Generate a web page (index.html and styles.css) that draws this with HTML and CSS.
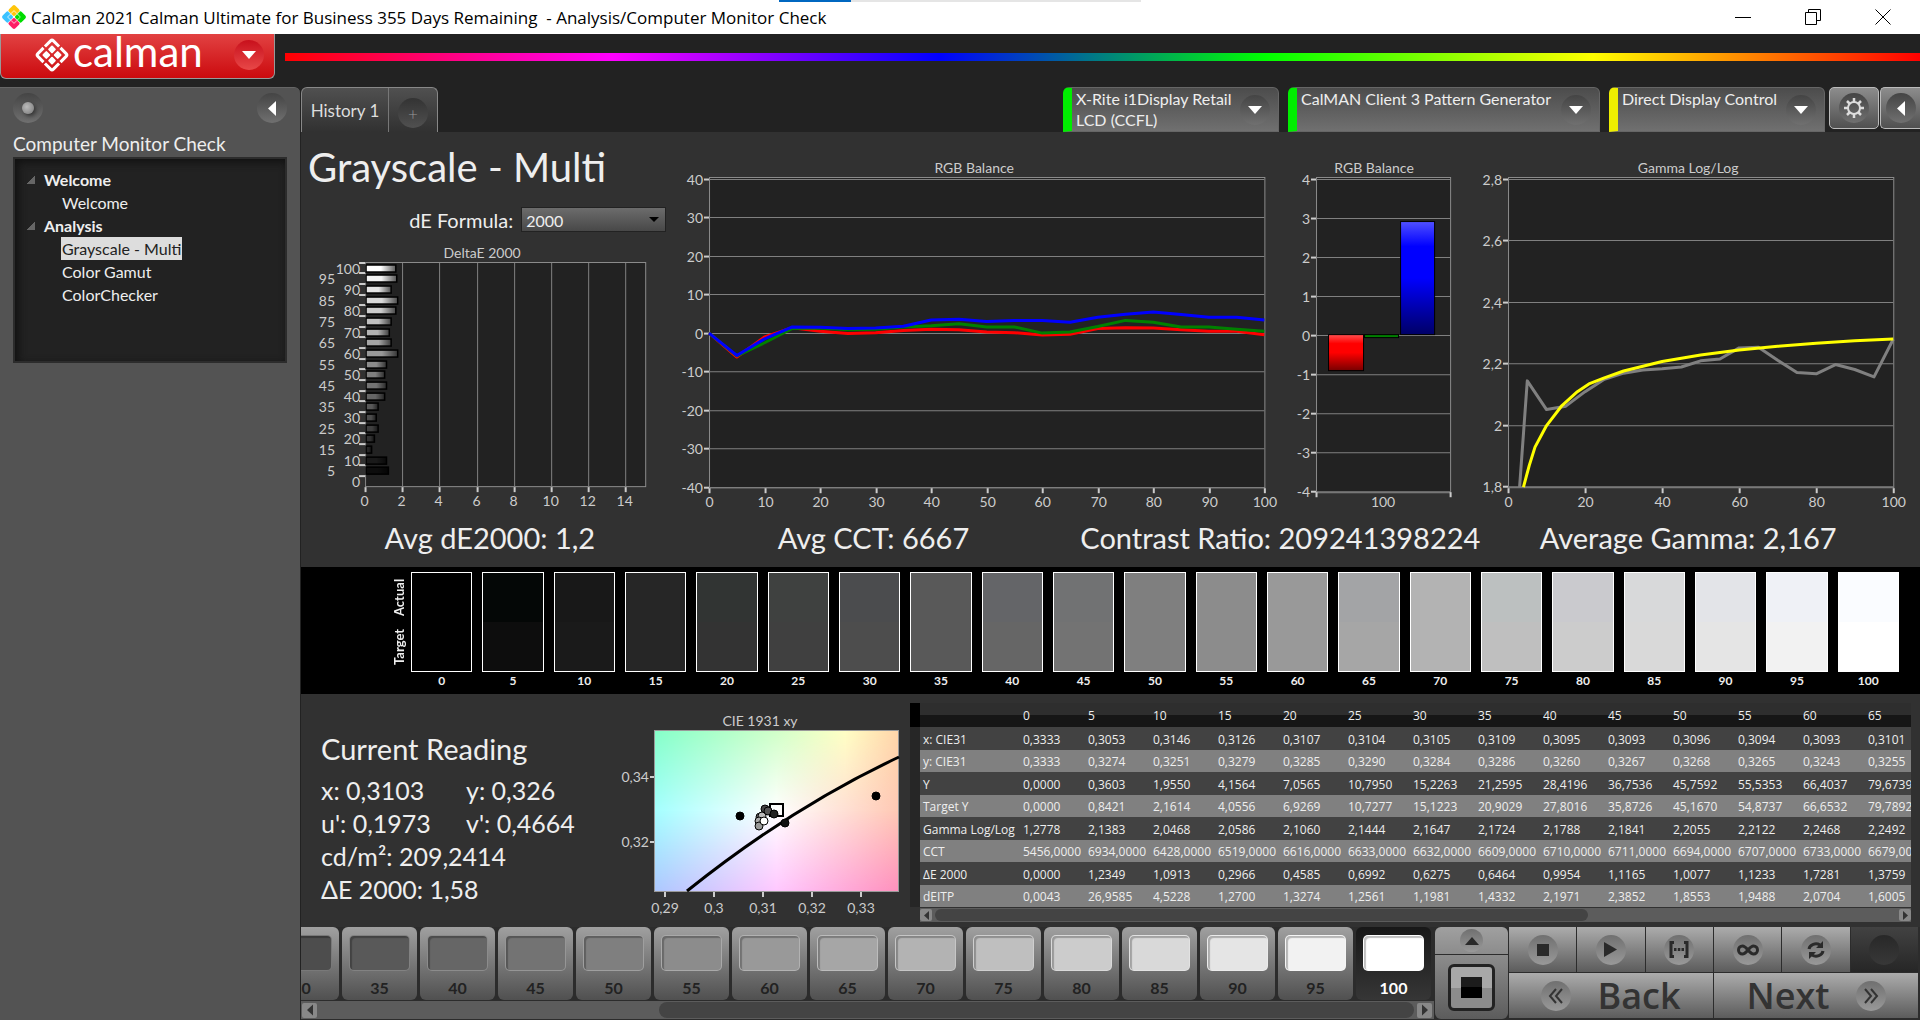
FILE: index.html
```html
<!DOCTYPE html>
<html lang="en">
<head>
    <meta charset="UTF-8">
    <meta name="viewport" content="width=device-width, initial-scale=1.0">
    <title>Calman 2021</title>
    <link rel="stylesheet" href="styles.css">
</head>
<body>
    <header class="titlebar">
        <svg class="app-icon" width="26" height="26" viewBox="0 0 26 26">
            <g transform="rotate(45 13 13)">
                <rect x="4" y="4" width="9" height="9" rx="2" fill="#ffc60b"/>
                <rect x="13" y="4" width="9" height="9" rx="2" fill="#0d0"/>
                <rect x="4" y="13" width="9" height="9" rx="2" fill="#3cc3ff"/>
                <rect x="13" y="13" width="9" height="9" rx="2" fill="#ff1f66"/>
                <path d="M8.500 8.500V13M8.500 8.500H13M17.500 8.500V13M13 8.500h4.500M8.500 13v4.500H13M17.500 13v4.500H13M13 5v16M5 13h16" stroke="#fff" stroke-opacity=".55" fill="none"/>
            </g>
        </svg>
        <span class="titlebar-text">Calman 2021 Calman Ultimate for Business 355 Days Remaining &nbsp;- Analysis/Computer Monitor Check</span>
        <span class="progress"></span>
        <div class="window-buttons">
            <button aria-label="Minimize"><svg width="16" height="16" viewBox="0 0 16 16"><path d="M0 8.5h16"/></svg></button>
            <button aria-label="Restore"><svg width="16" height="16" viewBox="0 0 16 16"><path d="M.5 3.5h11v12H.5zM3.500 3.500V.5h12v11h-4"/></svg></button>
            <button aria-label="Close"><svg width="16" height="16" viewBox="0 0 16 16"><path d="M.5.5l15 15M15.500.5l-15 15"/></svg></button>
        </div>
    </header>

    <div class="brandbar">
        <button class="brand">
            <svg width="36" height="36" viewBox="0 0 36 36">
                <g transform="rotate(45 18 18)" fill="#fff">
                    <rect x="11" y="11" width="6" height="6" rx="1"/>
                    <rect x="19" y="11" width="6" height="6" rx="1"/>
                    <rect x="11" y="19" width="6" height="6" rx="1"/>
                    <rect x="19" y="19" width="6" height="6" rx="1"/>
                    <path d="M7 17V9q0-2 2-2h8M19 7h8q2 0 2 2v8M29 19v8q0 2-2 2h-8M17 29H9q-2 0-2-2v-8" fill="none" stroke="#fff" stroke-width="3"/>
                </g>
            </svg>
            <span class="brand-name">calman</span>
            <span class="round round-red"><svg width="14" height="8" viewBox="0 0 14 8"><path d="M0 0h14L7 8z"/></svg></span>
        </button>
        <div class="rainbow"></div>
    </div>

    <div class="workspace">
        <aside class="sidebar">
            <div class="sidebar-top">
                <button class="round" aria-label="Status"><span class="knob"></span></button>
                <button class="round" aria-label="Collapse"><svg width="8" height="15" viewBox="0 0 8 15"><path d="M8 0v15L0 7.500z"/></svg></button>
            </div>
            <h2>Computer Monitor Check</h2>
            <nav class="tree">
                <p class="tree-group">Welcome</p>
                <a href="#">Welcome</a>
                <p class="tree-group">Analysis</p>
                <a href="#" class="selected">Grayscale - Multi</a>
                <a href="#">Color Gamut</a>
                <a href="#">ColorChecker</a>
            </nav>
        </aside>

        <main class="main">
            <div class="tabbar">
                <div class="tabs">
                    <button class="tab">History 1</button>
                    <button class="tab tab-add" aria-label="Add tab"><span class="round">+</span></button>
                </div>
                <button class="device device-meter"><span>X-Rite i1Display Retail<br>LCD (CCFL)</span><span class="round"><svg width="14" height="8" viewBox="0 0 14 8"><path d="M0 0h14L7 8z"/></svg></span></button>
                <button class="device device-source"><span>CalMAN Client 3 Pattern Generator</span><span class="round"><svg width="14" height="8" viewBox="0 0 14 8"><path d="M0 0h14L7 8z"/></svg></span></button>
                <button class="device device-display"><span>Direct Display Control</span><span class="round"><svg width="14" height="8" viewBox="0 0 14 8"><path d="M0 0h14L7 8z"/></svg></span></button>
                <button class="tool" aria-label="Settings"><span class="round"><svg width="22" height="22" viewBox="0 0 22 22"><circle cx="11" cy="11" r="6" fill="none" stroke="#ddd" stroke-width="2"/><path d="M11 1v4M11 17v4M1 11h4M17 11h4M4 4l2.500 2.500M15.500 15.500L18 18M4 18l2.500-2.500M15.500 6.500L18 4" stroke="#ddd" stroke-width="2.500"/></svg></span></button>
                <button class="tool tool-last" aria-label="Collapse"><span class="round"><svg width="8" height="15" viewBox="0 0 8 15"><path d="M8 0v15L0 7.500z"/></svg></span></button>
            </div>

            <section class="charts">
                <div class="delta">
                    <h1>Grayscale - Multi</h1>
                    <div class="formula">
                        <label for="formula">dE Formula:</label>
                        <select id="formula"><option>2000</option><option>1994</option><option>1976</option></select>
                    </div>
                    <svg id="delta-chart" class="chart" viewBox="0 0 378 273"></svg>
                </div>
                <svg id="rgb-chart" class="chart chart-tall" viewBox="0 0 600 360"></svg>
                <svg id="bar-chart" class="chart chart-tall" viewBox="0 0 190 360"></svg>
                <svg id="gamma-chart" class="chart chart-tall" viewBox="0 0 450 360"></svg>
            </section>

            <section class="metrics">
                <p>Avg dE2000: 1,2</p>
                <p>Avg CCT: 6667</p>
                <p class="metric-left">Contrast Ratio: 209241398224</p>
                <p>Average Gamma: 2,167</p>
            </section>

            <section class="strip">
                <div class="strip-labels"><span>Actual</span><span>Target</span></div>
                <div class="strip-cells" id="strip"></div>
            </section>

            <section class="details">
                <div class="reading">
                    <h3>Current Reading</h3>
                    <div class="reading-grid">
                        <span>x: 0,3103</span><span>y: 0,326</span>
                        <span>u': 0,1973</span><span>v': 0,4664</span>
                        <span class="wide">cd/m²: 209,2414</span>
                        <span class="wide">ΔE 2000: 1,58</span>
                    </div>
                </div>
                <svg id="cie-chart" class="chart" viewBox="0 0 308 230"></svg>
                <div class="data">
                    <div class="data-scroll">
                        <table id="data"></table>
                    </div>
                    <div class="scroll scroll-data">
                        <button aria-label="Scroll left"><svg width="5" height="9" viewBox="0 0 5 9"><path d="M5 0v9L0 4.500z"/></svg></button>
                        <div class="track"><div class="thumb"></div></div>
                        <button aria-label="Scroll right"><svg width="5" height="9" viewBox="0 0 5 9"><path d="M0 0v9l5-4.500z"/></svg></button>
                    </div>
                </div>
            </section>

            <footer class="bottom">
                <div class="patches">
                    <div class="patch-row" id="patches"></div>
                    <div class="scroll scroll-patches">
                        <button aria-label="Scroll left"><svg width="6" height="12" viewBox="0 0 5 9"><path d="M5 0v9L0 4.500z"/></svg></button>
                        <div class="track"><div class="thumb"></div></div>
                        <button aria-label="Scroll right"><svg width="6" height="12" viewBox="0 0 5 9"><path d="M0 0v9l5-4.500z"/></svg></button>
                    </div>
                </div>
                <div class="window-control">
                    <button class="wc-up" aria-label="Expand"><span class="round round-small"><svg width="14" height="8" viewBox="0 0 14 8"><path d="M0 8h14L7 0z"/></svg></span></button>
                    <button class="wc-pattern" aria-label="Pattern window"><span></span></button>
                </div>
                <div class="transport">
                    <div class="transport-row">
                        <button aria-label="Stop"><span class="round"><svg width="12" height="12" viewBox="0 0 12 12"><path d="M0 0h12v12H0z"/></svg></span></button>
                        <button aria-label="Play"><span class="round"><svg width="13" height="15" viewBox="0 0 13 15"><path d="M0 0v15l13-7.500z"/></svg></span></button>
                        <button aria-label="Read series"><span class="round"><svg width="20" height="17" viewBox="0 0 20 17"><path d="M5 1.500H2v14h3M15 1.500h3v14h-3" fill="none" stroke="#2a2a2a" stroke-width="3"/><path d="M5 7h2.500v3H5zM8.800 7h2.500v3H8.800zM12.500 7H15v3h-2.500z"/></svg></span></button>
                        <button aria-label="Read continuous"><span class="round"><svg width="22" height="12" viewBox="0 0 22 12"><path d="M11 6C8.500 3 7 2 5.500 2a4 4 0 0 0 0 8c1.500 0 3-1 5.500-4s4-4 5.500-4a4 4 0 0 1 0 8c-1.500 0-3-1-5.500-4z" fill="none" stroke="#2a2a2a" stroke-width="3"/></svg></span></button>
                        <button aria-label="Refresh"><span class="round"><svg width="18" height="18" viewBox="0 0 18 18"><path d="M2 8a7 6 0 0 1 11-4M16 10a7 6 0 0 1-11 4" fill="none" stroke="#2a2a2a" stroke-width="3"/><path d="M16 0v7H9zM2 18v-7h7z"/></svg></span></button>
                        <button class="dark" aria-label="Record"><span class="round"></span></button>
                    </div>
                    <div class="transport-row">
                        <button class="nav-button"><span class="round"><svg width="16" height="16" viewBox="0 0 16 16"><path d="M8 1L2 8l6 7M14 1L8 8l6 7" fill="none" stroke="#333" stroke-width="2"/></svg></span>Back</button>
                        <button class="nav-button">Next<span class="round"><svg width="16" height="16" viewBox="0 0 16 16"><path d="M2 1l6 7-6 7M8 1l6 7-6 7" fill="none" stroke="#333" stroke-width="2"/></svg></span></button>
                    </div>
                </div>
            </footer>
        </main>
    </div>

    <script src="script.js"></script>
</body>
</html>
```
FILE: styles.css
```css
* {
    box-sizing: border-box;
}

body {
    margin: 0;
    min-height: 100vh;
    display: flex;
    flex-direction: column;
    background-color: #222;
    color: #eee;
    font-family: Lato, "Noto Sans", sans-serif;
    font-size: 16px;
    overflow: hidden;
}

h1, h2, h3, p {
    margin: 0;
    font-weight: normal;
}

button {
    margin: 0;
    padding: 0;
    border: none;
    background: none;
    color: inherit;
    font-family: inherit;
    font-size: inherit;
    cursor: pointer;
}

svg {
    display: block;
    flex: none;
}

/* Round sunken button face used all over the app */
.round {
    display: flex;
    flex: none;
    align-items: center;
    justify-content: center;
    width: 30px;
    height: 30px;
    border-radius: 50%;
    background: linear-gradient(#444, #707070);
    fill: #fff;
}

.round-red {
    background: linear-gradient(#c8101c, #e84848);
}

.round-small {
    width: 23px;
    height: 23px;
}

/* Window title */
.titlebar {
    position: relative;
    display: flex;
    align-items: center;
    height: 34px;
    padding-left: 1px;
    background-color: #fff;
    color: #000;
    font-family: "Open Sans", "Noto Sans", sans-serif;
    font-size: 17px;
}

.titlebar-text {
    flex: 1;
    padding-left: 4px;
    white-space: nowrap;
}

.progress {
    position: absolute;
    top: 0;
    left: 779px;
    width: 362px;
    height: 2px;
    background: linear-gradient(90deg, #0067c0 72px, #e5e5e5 72px);
}

.window-buttons {
    display: flex;
    padding-right: 2px;
}

.window-buttons button {
    width: 70px;
    height: 34px;
    display: flex;
    align-items: center;
    justify-content: center;
}

.window-buttons path {
    fill: none;
    stroke: #000;
}

/* Logo and rainbow line */
.brandbar {
    display: flex;
    gap: 10px;
    height: 53px;
}

.brand {
    display: flex;
    align-items: center;
    width: 275px;
    height: 45px;
    padding: 0 10px 2px 33px;
    background: linear-gradient(#e24242, #cc0a0e);
    border: 1px solid #999;
    border-top: none;
    border-radius: 0 0 6px 6px;
    color: #fff;
}

.brand-name {
    flex: 1;
    padding: 0 0 8px 3px;
    text-align: left;
    font-size: 42px;
    line-height: 36px;
}

.rainbow {
    flex: 1;
    height: 8px;
    margin-top: 19px;
    background: linear-gradient(90deg, #f00, #f0f, #00f, #0f0, #ff0, #f00);
}

.workspace {
    flex: 1;
    display: flex;
}

/* Workflow sidebar */
.sidebar {
    width: 300px;
    padding: 5px 13px;
    background-color: #535353;
    border-top: 1px solid #666;
    border-radius: 0 6px 0 0;
}

.sidebar-top {
    display: flex;
    justify-content: space-between;
    height: 38px;
}

.knob {
    width: 12px;
    height: 12px;
    border-radius: 50%;
    background: radial-gradient(circle at 40% 40%, #bbb, #777);
    box-shadow: 2px 2px 4px #333;
}

.sidebar h2 {
    font-size: 19px;
    line-height: 26px;
}

.tree {
    display: flex;
    flex-direction: column;
    align-items: flex-start;
    height: 206px;
    padding: 9px 12px;
    background-color: #222;
    border: 2px solid #2c2c2c;
    box-shadow: inset 3px 3px 8px #111;
}

.tree-group {
    display: flex;
    align-items: center;
    height: 23px;
    font-weight: bold;
    line-height: 23px;
}

.tree-group::before {
    content: "";
    width: 8px;
    height: 8px;
    margin-right: 9px;
    background: linear-gradient(135deg, transparent 50%, #666 50%);
}

.tree a {
    margin-left: 34px;
    padding: 0 1px;
    color: #eee;
    line-height: 23px;
    text-decoration: none;
}

.tree .selected {
    background-color: #ddd;
    color: #222;
}

/* Main column */
.main {
    flex: 1;
    min-width: 0;
    display: flex;
    flex-direction: column;
    border-left: 1px solid #222;
    background-color: #313131;
}

.tabbar {
    display: flex;
    height: 45px;
    background-color: #222;
}

.tabs {
    display: flex;
    margin-right: auto;
    border: 1px solid #888;
    border-bottom: none;
    border-radius: 6px 6px 0 0;
    background: linear-gradient(#505050, #313131);
}

.tab {
    width: 86px;
    color: #ddd;
    font-size: 17px;
}

.tab-add {
    display: flex;
    align-items: center;
    justify-content: center;
    width: 49px;
    padding-top: 6px;
    border-left: 1px solid #777;
}

.tab-add .round {
    background: linear-gradient(#333, #505050);
    color: #999;
    font-weight: 300;
}

.device {
    display: flex;
    align-items: flex-start;
    justify-content: space-between;
    width: 216px;
    margin-right: 9px;
    padding: 0 8px 0 4px;
    border: 1px solid #666;
    border-left: 9px solid #0e0;
    border-radius: 6px 6px 0 0;
    background: linear-gradient(#4c4c4c, #707070);
    color: #eee;
    font-size: 16px;
    line-height: 21px;
    text-align: left;
    white-space: nowrap;
}

.device .round {
    margin: 7px 0 0 -8px;
}

.device-source {
    width: 312px;
}

.device-display {
    border-left-color: #ee0;
    margin-right: 4px;
}

.tool {
    display: flex;
    align-items: center;
    justify-content: center;
    width: 50px;
    height: 42px;
    border: 1px solid #bbb;
    border-radius: 5px;
    background: linear-gradient(#8c8c8c, #505050);
}

.tool-last {
    width: 40px;
    border-right: none;
    border-radius: 5px 0 0 5px;
    margin-left: 1px;
}

/* Charts */
.charts {
    display: grid;
    grid-template-columns: 378fr 600fr 190fr 450fr;
    align-items: start;
}

.chart {
    width: 100%;
    overflow: hidden;
}

.chart-tall {
    margin-top: 23px;
}

.chart text {
    fill: #ccc;
    font-size: 14px;
}

.chart .frame {
    fill: #222;
    stroke: #8c8c8c;
    stroke-width: 1;
}

.chart .frame-line {
    fill: none;
    stroke: #999;
}

.chart .grid {
    stroke: #808080;
}

.chart .tick {
    stroke: #ccc;
    stroke-width: 2;
}

.chart .line {
    fill: none;
    stroke-width: 3;
    stroke-linejoin: round;
}

.delta h1 {
    padding: 8px 0 0 7px;
    font-size: 40px;
    line-height: 54px;
}

.formula {
    display: flex;
    align-items: center;
    justify-content: flex-end;
    gap: 8px;
    height: 48px;
    padding: 3px 14px 0 0;
}

.formula label {
    font-size: 20px;
}

.formula select {
    appearance: none;
    width: 145px;
    height: 25px;
    padding: 2px 4px 0;
    border: 1px solid #222;
    border-radius: 0;
    background: linear-gradient(#6c6c6c, #484848);
    color: #eee;
    font-family: inherit;
    font-size: 16px;
}

.formula::after {
    content: "";
    margin: 0 6px 0 -25px;
    border: 5px solid transparent;
    border-top-color: #000;
    border-bottom: none;
}

.metrics {
    display: grid;
    grid-template-columns: 378fr 390fr 410fr 416fr 24fr;
    height: 52px;
    font-size: 29px;
    line-height: 46px;
    text-align: center;
    white-space: nowrap;
}

.metrics .metric-left {
    padding-left: 12px;
    text-align: left;
}

/* Actual / target strip */
.strip {
    display: flex;
    height: 127px;
    padding: 5px 16px 0 92px;
    background-color: #000;
    font-size: 12px;
    font-weight: bold;
}

.strip-labels {
    display: flex;
    flex-direction: column;
    width: 13px;
    height: 100px;
    font-size: 13px;
}

.strip-labels span {
    flex: 1;
    writing-mode: vertical-rl;
    transform: rotate(180deg);
    line-height: 13px;
    text-align: center;
}

.strip-cells {
    flex: 1;
    display: flex;
}

.strip-cell {
    flex: 1;
    padding: 0 5px;
    text-align: center;
    line-height: 18px;
}

.strip-swatch {
    height: 100px;
    border: 1px solid #fff;
}

/* Reading, CIE chart, table */
.details {
    flex: 1;
    display: grid;
    grid-template-columns: 301fr 308fr 1001fr;
    padding-right: 9px;
    align-items: start;
}

.reading {
    padding: 37px 0 0 20px;
    font-size: 25px;
    white-space: nowrap;
}

.reading h3 {
    font-size: 29px;
    line-height: 36px;
}

.reading-grid {
    display: grid;
    grid-template-columns: 145px 1fr;
    padding-top: 7px;
    line-height: 33px;
}

.wide {
    grid-column: span 2;
}

.data {
    min-width: 0;
    padding-top: 9px;
}

.data-scroll {
    overflow: hidden;
}

.data table {
    width: 1019px;
    table-layout: fixed;
    border-collapse: collapse;
    font-family: "Open Sans", "Noto Sans", sans-serif;
    font-size: 12px;
    line-height: 18px;
}

.data th, .data td {
    padding: 2px 0 0 4px;
    font-weight: normal;
    text-align: left;
    white-space: nowrap;
}

.data tbody th {
    padding-left: 3px;
}

.data tr {
    height: 22px;
    background-color: #808080;
}

.data tr:nth-child(odd) {
    height: 23px;
    background-color: #424242;
}

.data thead tr:nth-child(odd) {
    height: 24px;
    background: linear-gradient(#2e2e2e 50%, #161616 50%);
}

.data .mark {
    width: 10px;
    padding: 0;
    background-color: #262626;
}

.data thead .mark {
    background-color: #000;
}

.data .name {
    width: 99px;
}

.scroll {
    display: flex;
    align-items: center;
    gap: 3px;
    background-color: #5c5c5c;
}

.scroll button {
    display: flex;
    align-items: center;
    justify-content: center;
    width: 12px;
    height: 12px;
    border-radius: 2px;
    background-color: #888;
    fill: #333;
}

.track {
    flex: 1;
    height: 100%;
    padding: 1px 0;
}

.thumb {
    height: 100%;
    border-radius: 8px;
    background-color: #444;
}

.scroll-data {
    height: 14px;
    margin: 1px 0 0 10px;
}

.scroll-data .thumb {
    width: 68%;
}

/* Bottom bar */
.bottom {
    display: flex;
    height: 93px;
    background-color: #2c2c2c;
}

.patches {
    flex: 1;
    min-width: 0;
}

.patch-row {
    display: flex;
    justify-content: flex-end;
    gap: 3px;
    height: 74px;
    padding-right: 3px;
    overflow: hidden;
}

.patch {
    flex: none;
    width: 75px;
    height: 73px;
    padding: 8px 7px 0;
    border-radius: 6px;
    background: linear-gradient(#a0a0a0, #505050);
    color: #222;
    font-weight: bold;
    line-height: 34px;
}

.patch.active {
    background: linear-gradient(#181818, #363636);
    color: #fff;
}

.patch-color {
    display: block;
    height: 36px;
    border: 1px solid rgba(255, 255, 255, 0.25);
    border-radius: 5px;
    box-shadow: inset 2px 2px 1px rgba(0, 0, 0, 0.25);
}

.scroll-patches {
    height: 18px;
    padding: 0 2px 0 1px;
}

.scroll-patches button {
    width: 15px;
    height: 15px;
}

.scroll-patches .thumb {
    width: 69%;
    margin-left: auto;
}

.window-control {
    display: flex;
    flex-direction: column;
    gap: 1px;
    width: 73px;
    margin: 0 1px;
}

.wc-up {
    display: flex;
    align-items: center;
    justify-content: center;
    height: 27px;
    border-radius: 6px 6px 0 0;
    background: linear-gradient(#a0a0a0, #8c8c8c);
}

.wc-up .round, .transport .round {
    background: linear-gradient(#707070, #999);
    fill: #2a2a2a;
}

.wc-pattern {
    display: flex;
    align-items: center;
    justify-content: center;
    height: 64px;
    border-radius: 0 0 6px 6px;
    background: linear-gradient(#8c8c8c, #5c5c5c);
}

.wc-pattern span {
    width: 47px;
    height: 47px;
    border: 3px solid #222;
    border-radius: 6px;
    background: linear-gradient(#1c1c1c 50%, #000 50%) center / 21px 21px no-repeat, linear-gradient(#a8a8a8 50%, #8c8c8c 50%);
}

.transport {
    display: flex;
    flex-direction: column;
    gap: 1px;
    width: 411px;
    padding-right: 2px;
}

.transport-row {
    display: flex;
    gap: 1px;
    height: 45px;
}

.transport button {
    flex: 1;
    display: flex;
    align-items: center;
    justify-content: center;
    background: linear-gradient(#acacac, #5c5c5c);
}

.transport .dark {
    background: linear-gradient(#424242, #262626);
}

.transport .dark .round {
    background: linear-gradient(#282828, #383838);
}

.transport .nav-button {
    gap: 26px;
    color: #333;
    font-family: "Open Sans", "Noto Sans", sans-serif;
    font-size: 36px;
    font-weight: 600;
    line-height: 40px;
}
```
FILE: script.js
```js
const levels = [0, 5, 10, 15, 20, 25, 30, 35, 40, 45, 50, 55, 60, 65, 70, 75, 80, 85, 90, 95, 100];

function text(x, y, str, anchor) {
    return `<text x="${x}" y="${y}" text-anchor="${anchor || 'middle'}">${str}</text>`;
}

function line(x1, y1, x2, y2, cls) {
    return `<path class="${cls}" d="M${x1} ${y1}L${x2} ${y2}"/>`;
}

function num(v) {
    return String(v).replace('.', ',');
}

function draw(id, out) {
    document.getElementById(id).innerHTML = out;
}

function rect(x, y, w, h, cls) {
    return `<rect class="${cls}" x="${x}" y="${y}" width="${w}" height="${h}"/>`;
}

function polyline(points, color) {
    return `<polyline class="line" stroke="${color}" points="${points.map(p => p.join(',')).join(' ')}"/>`;
}

function gray(level) {
    const v = Math.round(level * 2.55);
    return `rgb(${v},${v},${v})`;
}

// DeltaE 2000, one horizontal bar per level
function drawDelta() {
    const values = [0, 1.2, 1.1, 0.3, 0.45, 0.65, 0.55, 0.65, 1, 1.1, 1, 1.1, 1.7, 1.35, 1.25, 1.35, 1.6, 1.7, 1.35, 1.65, 1.6];
    const step = 224 / 21;
    let out = '<defs><linearGradient id="shade"><stop offset=".5" stop-opacity="0"/><stop offset="1" stop-opacity=".65"/></linearGradient></defs>';
    out += text(181, 16, 'DeltaE 2000') + rect(64.5, 20.500, 280, 224, 'frame');
    for (let v = 0; v < 15; v += 2) {
        const x = Math.round(64 + v * 18.6) + 0.5;
        out += line(x, 21, x, 244, 'grid') + line(x, 245, x, 250, 'tick') + text(x - 1, 264, v);
    }
    levels.forEach((level, i) => {
        const top = 244.500 - (i + 1) * step;
        out += line(58, Math.round(top), 64, Math.round(top), 'tick');
        out += text(i % 2 ? 34 : 59, Math.round(top + 11), level, 'end');
        if (values[i]) {
            const box = `x="65" y="${Math.round(top + 2)}" width="${values[i] * 18.6}" height="7"`;
            out += `<rect ${box} fill="${gray(level)}"/><rect ${box} fill="url(#shade)" stroke="#000" stroke-width="1.5"/>`;
        }
    });
    draw('delta-chart', out);
}

function drawRgb() {
    const red = [0, -6.2, -1, 1.4, 0.5, -0.1, 0.1, 0.7, 1, 0.9, 0.3, 0.1, -0.5, -0.3, 1.2, 1.4, 1.3, 0.9, 0.5, 0.5, -0.4];
    const green = [0, -5.9, -2.5, 1.2, 1.3, 0.9, 1, 1.6, 1.9, 2.4, 1.6, 1.6, 0, 0.3, 1.7, 3.3, 2.8, 1.6, 1.6, 1, 0.5];
    const blue = [0, -5.8, -1.5, 1.6, 1.5, 1.2, 1.3, 1.8, 3.4, 3.6, 3, 3.3, 3.3, 2.8, 4.1, 4.9, 5.5, 4.8, 4.1, 4.1, 3.4];
    const y = v => 178 - v * 3.85;
    const points = list => list.map((v, i) => [30 + i * 27.75, y(v)]);
    let out = text(295, 18, 'RGB Balance') + rect(30.5, 22.5, 555, 310, 'frame');
    for (let v = -40; v <= 40; v += 10) {
        const py = Math.round(y(v) - 0.5) + 0.5;
        out += line(30, py, 585, py, 'grid') + line(25, py, 30, py, 'tick') + text(24, py + 5, v, 'end');
    }
    for (let v = 0; v <= 100; v += 10) {
        const x = Math.round(30 + v * 5.55) + 0.5;
        out += line(x, 333, x, 338, 'tick') + text(x, 352, v);
    }
    out += polyline(points(red), '#f00') + polyline(points(green), '#008000') + polyline(points(blue), '#00f');
    draw('rgb-chart', out);
}

function drawBars() {
    const y = v => 180 - v * 39.1;
    let out = `<defs>
        <linearGradient id="r" x2="0" y2="1"><stop stop-color="#ff5050"/><stop offset=".25" stop-color="#f00"/><stop offset=".5" stop-color="#f00"/><stop offset="1" stop-color="#700"/></linearGradient>
        <linearGradient id="b" x2="0" y2="1"><stop stop-color="#5050ff"/><stop offset=".22" stop-color="#00f"/><stop offset=".5" stop-color="#00f"/><stop offset="1" stop-color="#006"/></linearGradient>
    </defs>`;
    out += text(94, 18, 'RGB Balance') + rect(36.5, 22.5, 134, 315, 'frame');
    for (let v = -4; v <= 4; v++) {
        const py = Math.round(y(v)) + 0.5;
        out += line(36, py, 170, py, 'grid') + line(31, py, 36, py, 'tick') + text(30, py + 5, v, 'end');
    }
    out += line(36.5, 337, 36.5, 342, 'tick') + line(170.5, 337, 170.5, 342, 'tick') + text(103, 352, 100);
    out += '<g stroke="#000"><rect x="48.5" y="179.500" width="35" height="36" fill="url(#r)"/>';
    out += '<rect x="84.5" y="179.500" width="34" height="3" fill="#008000"/>';
    out += '<rect x="120.500" y="66.500" width="34" height="113" fill="url(#b)"/></g>';
    draw('bar-chart', out);
}

function drawGamma() {
    const measured = [[3, 1.8], [5, 2.145], [10, 2.052], [15, 2.063], [20, 2.11], [25, 2.15], [30, 2.17], [35, 2.18], [40, 2.184], [45, 2.19], [50, 2.21], [55, 2.216], [60, 2.252], [65, 2.254], [70, 2.212], [75, 2.172], [80, 2.168], [85, 2.198], [90, 2.182], [95, 2.158], [100, 2.28]];
    const target = [[4, 1.8], [5.5, 1.87], [7, 1.93], [10, 2], [14, 2.065], [18, 2.11], [21, 2.135], [25, 2.155], [30, 2.177], [40, 2.208], [50, 2.229], [60, 2.245], [70, 2.257], [80, 2.267], [90, 2.275], [100, 2.281]];
    const place = p => [38 + p[0] * 3.85, 24 + (2.8 - p[1]) * 308];
    let out = text(218, 18, 'Gamma Log/Log') + rect(38.5, 22.5, 385, 310, 'frame');
    [2.8, 2.6, 2.4, 2.2, 2, 1.8].forEach(v => {
        const py = Math.round(place([0, v])[1] - 0.5) + 0.5;
        out += line(38, py, 423, py, 'grid') + line(33, py, 38, py, 'tick') + text(32, py + 5, num(v), 'end');
    });
    for (let v = 0; v <= 100; v += 20) {
        const x = Math.round(38 + v * 3.85) + 0.5;
        out += line(x, 333, x, 338, 'tick') + text(x, 352, v);
    }
    out += polyline(measured.map(place), '#808080') + polyline(target.map(place), '#ff0');
    draw('gamma-chart', out);
}

// Chromaticity background is three horizontal blends faded into each other
function drawCie() {
    const stops = list => list.map(s => `<stop offset="${s[0]}" stop-color="${s[1]}"/>`).join('');
    let out = `<defs>
        <linearGradient id="mid">${stops([[0, '#a4ffff'], [0.5, '#ffffff'], [1, '#ffc8b4']])}</linearGradient>
        <linearGradient id="top">${stops([[0, '#84ffc8'], [0.5, '#d0ffc8'], [0.78, '#ffffc4'], [1, '#ffd4a8']])}</linearGradient>
        <linearGradient id="low">${stops([[0, '#acc8ff'], [0.5, '#ffc8ff'], [1, '#ff90bc']])}</linearGradient>
        <linearGradient id="down" x2="0" y2="1"><stop stop-color="#fff"/><stop offset=".5" stop-color="#000"/></linearGradient>
        <linearGradient id="up" x2="0" y2="1"><stop offset=".5" stop-color="#000"/><stop offset="1" stop-color="#fff"/></linearGradient>
        <mask id="fade-top"><rect x="52" y="36" width="245" height="161" fill="url(#down)"/></mask>
        <mask id="fade-low"><rect x="52" y="36" width="245" height="161" fill="url(#up)"/></mask>
    </defs>`;
    out += text(158, 32, 'CIE 1931 xy');
    out += '<rect x="52" y="36" width="245" height="161" fill="url(#mid)"/>';
    out += '<rect x="52" y="36" width="245" height="161" fill="url(#top)" mask="url(#fade-top)"/>';
    out += '<rect x="52" y="36" width="245" height="161" fill="url(#low)" mask="url(#fade-low)"/>';
    out += rect(52.5, 36.5, 244, 161, 'frame-line');
    out += '<path class="line" stroke="#000" d="M85 197Q190 113 297 63"/>';
    out += '<rect x="168" y="110" width="13" height="12" fill="none" stroke="#000" stroke-width="2"/>';
    const dots = [[138, 122, '#000'], [274, 102, '#000'], [183, 129, '#111'], [163, 115, '#444'], [158, 123, '#777'], [160, 122, '#bbb'], [157, 127, '#aaa'], [157, 132, '#999'], [166, 117, '#555'], [172, 120, '#222'], [162, 127, '#fff']];
    dots.forEach(d => {
        out += `<circle cx="${d[0]}" cy="${d[1]}" r="4" fill="${d[2]}" stroke="#000"/>`;
    });
    [['0,34', 83], ['0,32', 148]].forEach(l => {
        out += line(48, l[1], 52, l[1], 'tick') + text(47, l[1] + 5, l[0], 'end');
    });
    [['0,29', 63], ['0,3', 112], ['0,31', 161], ['0,32', 210], ['0,33', 259]].forEach(l => {
        out += line(l[1], 198, l[1], 203, 'tick') + text(l[1], 219, l[0]);
    });
    draw('cie-chart', out);
}

function drawStrip() {
    const actual = { 5: '#040706', 10: '#181818', 20: '#313433', 25: '#3f4140', 30: '#4b4c4e', 40: '#646568', 45: '#717273', 65: '#a3a4a6', 75: '#bcc0c0', 80: '#cacace', 85: '#d8d9da', 90: '#e3e4e8', 95: '#eff1f6', 100: '#fafcff' };
    draw('strip', levels.map(level => {
        const bg = `linear-gradient(${actual[level] || gray(level)} 50%, ${gray(level)} 50%)`;
        return `<div class="strip-cell"><div class="strip-swatch" style="background: ${bg}"></div>${level}</div>`;
    }).join(''));
}

function drawTable() {
    const rows = [
        ['x: CIE31', '0,3333 0,3053 0,3146 0,3126 0,3107 0,3104 0,3105 0,3109 0,3095 0,3093 0,3096 0,3094 0,3093 0,3101'],
        ['y: CIE31', '0,3333 0,3274 0,3251 0,3279 0,3285 0,3290 0,3284 0,3286 0,3260 0,3267 0,3268 0,3265 0,3243 0,3255'],
        ['Y', '0,0000 0,3603 1,9550 4,1564 7,0565 10,7950 15,2263 21,2595 28,4196 36,7536 45,7592 55,5353 66,4037 79,6739'],
        ['Target Y', '0,0000 0,8421 2,1614 4,0556 6,9269 10,7277 15,1223 20,9029 27,8016 35,8726 45,1670 54,8737 66,6532 79,7892'],
        ['Gamma Log/Log', '1,2778 2,1383 2,0468 2,0586 2,1060 2,1444 2,1647 2,1724 2,1788 2,1841 2,2055 2,2122 2,2468 2,2492'],
        ['CCT', '5456,0000 6934,0000 6428,0000 6519,0000 6616,0000 6633,0000 6632,0000 6609,0000 6710,0000 6711,0000 6694,0000 6707,0000 6733,0000 6679,0000'],
        ['ΔE 2000', '0,0000 1,2349 1,0913 0,2966 0,4585 0,6992 0,6275 0,6464 0,9954 1,1165 1,0077 1,1233 1,7281 1,3759'],
        ['dEITP', '0,0043 26,9585 4,5228 1,2700 1,3274 1,2561 1,1981 1,4332 2,1971 2,3852 1,8553 1,9488 2,0704 1,6005']
    ];
    const head = levels.slice(0, 14).map(level => `<th>${level}</th>`).join('');
    const body = rows.map(row => {
        const cells = row[1].split(' ').map(v => `<td>${v}</td>`).join('');
        return `<tr><td class="mark"></td><th>${row[0]}</th>${cells}</tr>`;
    }).join('');
    draw('data', `<thead><tr><th class="mark"></th><th class="name"></th>${head}</tr></thead><tbody>${body}</tbody>`);
}

function drawPatches() {
    draw('patches', levels.slice(6).map(level => {
        return `<button class="patch${level === 100 ? ' active' : ''}"><span class="patch-color" style="background-color: ${gray(level)}"></span>${level}</button>`;
    }).join(''));
}

drawDelta();
drawRgb();
drawBars();
drawGamma();
drawCie();
drawStrip();
drawTable();
drawPatches();
```
